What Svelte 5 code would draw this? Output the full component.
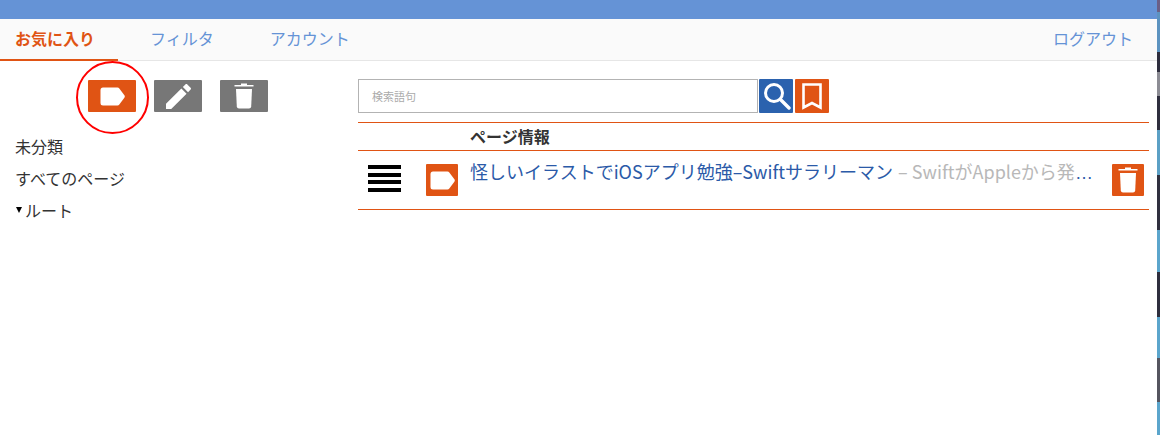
<script>
	const tabs = [
		{ label: 'お気に入り', active: true },
		{ label: 'フィルタ' },
		{ label: 'アカウント' }
	];
	const folders = ['未分類', 'すべてのページ'];
</script>

{#snippet tagIcon(w, h)}
	<svg width={w} height={h} viewBox="0 0 25 19">
		<path d="M3 0.5H17.5Q18.6 0.5 19.3 1.4L24.4 8.3Q25.2 9.5 24.4 10.7L19.3 17.6Q18.6 18.5 17.5 18.5H3Q0.5 18.5 0.5 16V3Q0.5 0.5 3 0.5Z" fill="#fff" />
	</svg>
{/snippet}

{#snippet trashIcon()}
	<svg width="20" height="26" viewBox="0 0 20 26">
		<path d="M7 0.5H13V2H19.5V3.6H0.5V2H7Z" fill="#fff" />
		<path d="M2 6H18L17.2 23.5Q17 25.5 15 25.5H5Q3 25.5 2.8 23.5Z" fill="#fff" />
	</svg>
{/snippet}

<div class="page">
	<div class="app">
		<div class="topbar"></div>
		<nav class="nav">
			{#each tabs as tab}
				<a class="tab" class:active={tab.active}>{tab.label}</a>
			{/each}
			<a class="tab logout">ログアウト</a>
		</nav>
		<div class="content">
			<aside class="side">
				<div class="tools">
					<button class="tool orange">
						{@render tagIcon(25, 19)}
						<span class="circle"></span>
					</button>
					<button class="tool">
						<svg width="25" height="25" viewBox="3 3 18 18">
							<path d="M3 17.25V21h3.75L17.81 9.94l-3.75-3.75L3 17.25zM20.71 7.04c.39-.39.39-1.02 0-1.41l-2.34-2.34c-.39-.39-1.02-.39-1.41 0l-1.83 1.83 3.75 3.75 1.83-1.83z" fill="#fff" />
						</svg>
					</button>
					<button class="tool">{@render trashIcon()}</button>
				</div>
				<ul class="folders">
					{#each folders as folder}
						<li>{folder}</li>
					{/each}
					<li class="root"><span class="arrow"></span>ルート</li>
				</ul>
			</aside>
			<main class="main">
				<div class="search">
					<input class="query" type="text" placeholder="検索語句" />
					<button class="sq blue" aria-label="search">
						<svg width="30" height="30" viewBox="0 0 30 30">
							<circle cx="13" cy="12" r="8.5" fill="none" stroke="#fff" stroke-width="3" />
							<path d="M19.5 18.5L28 27" stroke="#fff" stroke-width="3.4" stroke-linecap="round" />
						</svg>
					</button>
					<button class="sq orange" aria-label="bookmark">
						<svg width="20" height="27" viewBox="0 0 20 27">
							<path d="M1.5 1.5H18.5V24.5L10 20L1.5 24.5Z" fill="none" stroke="#fff" stroke-width="2.6" />
						</svg>
					</button>
				</div>
				<div class="head">ページ情報</div>
				<div class="row">
					<div class="burger"><i></i><i></i><i></i><i></i></div>
					<button class="small orange">{@render tagIcon(25, 19)}</button>
					<div class="info"><span class="title">怪しいイラストでiOSアプリ勉強–Swiftサラリーマン</span> <span class="desc">– SwiftがAppleから発表した新しい言語です</span></div>
					<button class="small orange">{@render trashIcon()}</button>
				</div>
			</main>
		</div>
	</div>
	<div class="strip"></div>
</div>

<style>
	:global(body) {
		background: #fff;
	}
	.page {
		display: flex;
		height: 435px;
		overflow: hidden;
		font-family: "Noto Sans CJK JP", "Noto Sans", sans-serif;
		color: #333;
	}
	.app {
		flex: 1;
		min-width: 0;
	}
	.strip {
		width: 3px;
		background: linear-gradient(
			to bottom,
			#6b5f86 0 12px,
			#5c93c0 12px 52px,
			#2e2e3e 52px 72px,
			#8c8c94 72px 96px,
			#2e2e3e 96px 130px,
			#5ba0c5 130px 175px,
			#30303f 175px 230px,
			#5ba5cc 230px 272px,
			#2e2e3e 272px 317px,
			#5ba5cc 317px 358px,
			#55555f 358px 402px,
			#5ba5cc 402px
		);
	}
	.topbar {
		height: 19px;
		background: #6593d6;
	}
	.nav {
		display: flex;
		height: 42px;
		box-sizing: border-box;
		background: #fafafa;
		border-bottom: 1px solid #e6e6e6;
	}
	.tab {
		padding: 0 28px;
		height: 42px;
		box-sizing: border-box;
		font-size: 16px;
		line-height: 39px;
		white-space: nowrap;
		color: #6593d6;
	}
	.tab.active {
		padding: 0 23px 0 15px;
		margin-right: 4px;
		color: #e05414;
		font-weight: 700;
		border-bottom: 2px solid #e05414;
	}
	.logout {
		margin-left: auto;
		padding: 0 24px 0 0;
	}
	.content {
		display: flex;
	}
	.side {
		width: 358px;
		flex: none;
	}
	.tools {
		display: flex;
		gap: 18px;
		padding: 19px 0 0 88px;
	}
	button {
		display: flex;
		align-items: center;
		justify-content: center;
		padding: 0;
		border: 0;
		border-radius: 1px;
	}
	.tool {
		position: relative;
		width: 48px;
		height: 32px;
		background: #777;
	}
	.orange {
		background: #e05414;
	}
	.circle {
		position: absolute;
		left: -12px;
		top: -19px;
		width: 69px;
		height: 69px;
		border: 2px solid #f00;
		border-radius: 50%;
	}
	.folders {
		list-style: none;
		margin: 18px 0 0;
		padding: 0 0 0 15px;
		font-size: 16px;
		line-height: 32px;
	}
	.root {
		display: flex;
		align-items: center;
	}
	.arrow {
		width: 0;
		height: 0;
		margin: 0 3px 0 1px;
		border-left: 3.5px solid transparent;
		border-right: 3.5px solid transparent;
		border-top: 6px solid #000;
	}
	.main {
		width: 791px;
		flex: none;
	}
	.search {
		display: flex;
		height: 34px;
		margin-top: 18px;
	}
	.query {
		width: 400px;
		height: 34px;
		box-sizing: border-box;
		padding: 0 13px;
		border: 1px solid #b3b3b3;
		font-family: inherit;
		font-size: 11px;
		outline: none;
	}
	.query::placeholder {
		color: #aaa;
	}
	.sq {
		width: 34px;
		height: 34px;
		margin-left: 1px;
	}
	.sq.orange {
		margin-left: 2px;
	}
	.blue {
		background: #2b62ae;
	}
	.head {
		height: 29px;
		box-sizing: border-box;
		margin-top: 9px;
		padding-left: 112px;
		border-top: 1px solid #e05414;
		border-bottom: 1px solid #e05414;
		font-size: 16px;
		font-weight: 700;
		line-height: 26px;
	}
	.row {
		display: grid;
		grid-template-columns: 68px 45px 1fr 37px;
		height: 59px;
		box-sizing: border-box;
		padding-top: 13px;
		border-bottom: 1px solid #e05414;
	}
	.burger {
		display: flex;
		flex-direction: column;
		gap: 3.7px;
		width: 33px;
		margin: 1px 0 0 10px;
	}
	.burger i {
		height: 4px;
		background: #000;
	}
	.small {
		width: 32px;
		height: 32px;
	}
	.info {
		min-width: 0;
		margin: -6px 0 0 -1px;
		padding-right: 16px;
		overflow: hidden;
		white-space: nowrap;
		text-overflow: ellipsis;
		font-family: "Liberation Sans", sans-serif;
		font-size: 18px;
		line-height: 26px;
		color: #2b5aa8;
	}
	.title,
	.desc {
		font-family: "Noto Sans CJK JP", "Noto Sans", sans-serif;
	}
	.desc {
		color: #b8b8b8;
	}
</style>
